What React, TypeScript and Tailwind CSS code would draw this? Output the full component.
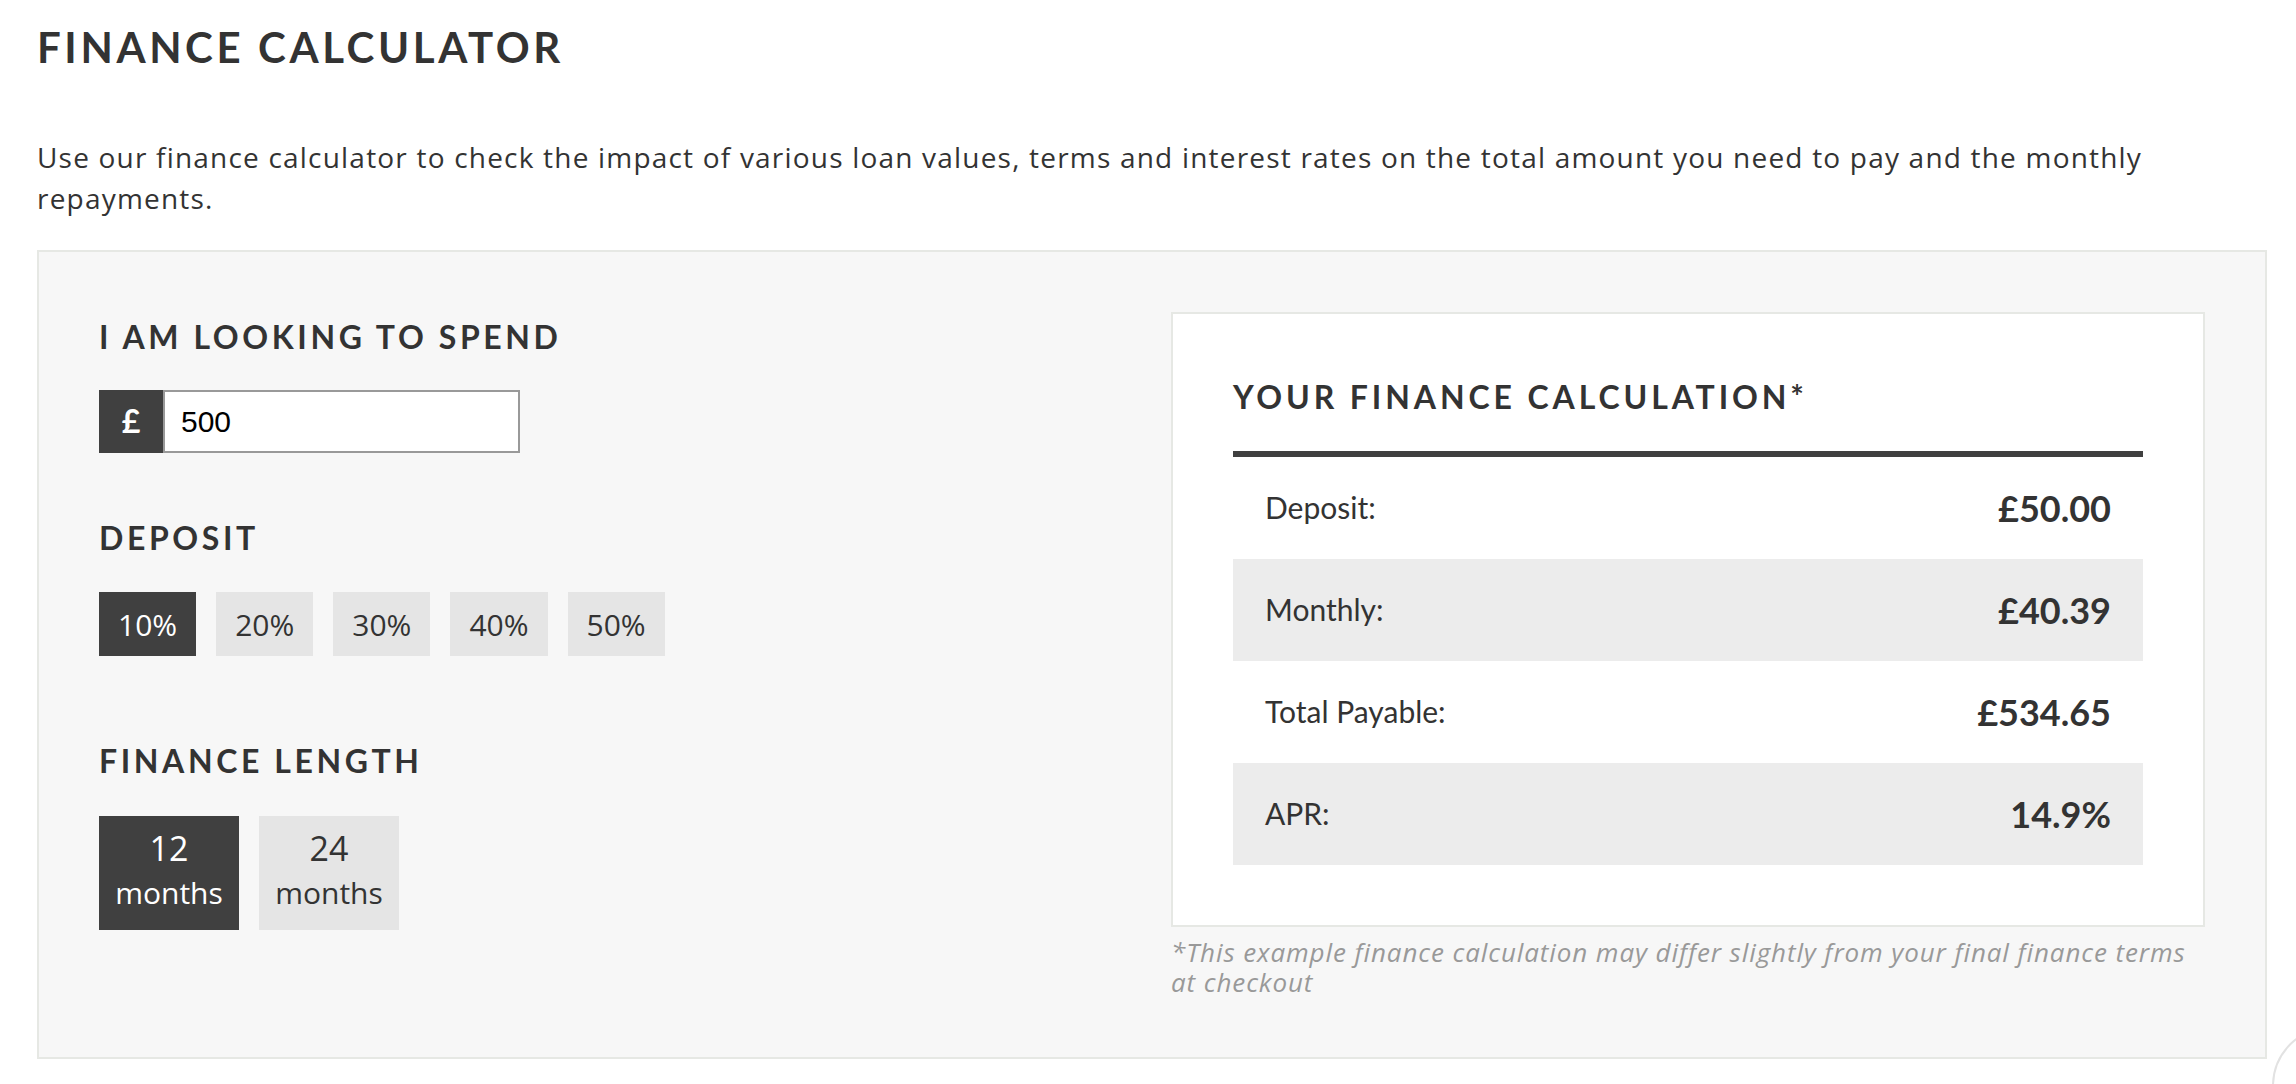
import { useState } from 'react';

const deposits = [10, 20, 30, 40, 50];
const lengths = [12, 24];

export default function App() {
  const [spend, setSpend] = useState('500');
  const [deposit, setDeposit] = useState(10);
  const [months, setMonths] = useState(12);

  return (
    <div className="relative min-h-screen overflow-hidden bg-white pl-[37px] pr-[29px] pt-[22px] text-[#333]">
      {/* Title */}
      <h1 className="font-['Lato',sans-serif] text-[42px] font-bold uppercase leading-[1.2] tracking-[3.6px]">
        Finance Calculator
      </h1>

      <p className="mt-[65px] font-['Open_Sans',sans-serif] text-[28px] leading-[41px] tracking-[1.2px]">
        Use our finance calculator to check the impact of various loan values, terms and interest rates on the total
        amount you need to pay and the monthly repayments.
      </p>

      {/* Calculator panel */}
      <div className="mt-[31px] flex border-2 border-[#e6e8e4] bg-[#f7f7f7] p-[60px]">
        {/* Left column */}
        <div className="flex-1 pt-[6px]">
          <SectionHeading>I am looking to spend</SectionHeading>
          <div className="mt-[33px] flex h-[63px] w-[421px]">
            <span className="flex w-[64px] items-center justify-center bg-[#404040] font-['Lato',sans-serif] text-[32px] font-bold text-white">
              £
            </span>
            <input
              value={spend}
              onChange={(e) => setSpend(e.target.value)}
              className="w-[357px] border-2 border-[#999] bg-white px-[16px] font-['Liberation_Sans',Arial,sans-serif] text-[30px] text-black outline-none"
            />
          </div>

          <div className="mt-[66px]">
            <SectionHeading>Deposit</SectionHeading>
          </div>
          <div className="mt-[35px] flex gap-[20px]">
            {deposits.map((d) => (
              <button
                key={d}
                onClick={() => setDeposit(d)}
                className={`flex h-[64px] items-center px-[19px] font-['Open_Sans',sans-serif] text-[30px] ${
                  deposit === d ? 'bg-[#404040] text-white' : 'bg-[#e5e5e5] text-[#333]'
                }`}
              >
                {d}%
              </button>
            ))}
          </div>

          <div className="mt-[86px]">
            <SectionHeading>Finance length</SectionHeading>
          </div>
          <div className="mt-[35px] flex gap-[20px]">
            {lengths.map((m) => (
              <button
                key={m}
                onClick={() => setMonths(m)}
                className={`flex h-[114px] w-[140px] flex-col items-center pt-[12px] font-['Open_Sans',sans-serif] ${
                  months === m ? 'bg-[#404040] text-white' : 'bg-[#e5e5e5] text-[#333]'
                }`}
              >
                <span className="text-[34px] leading-[40px]">{m}</span>
                <span className="mt-[5px] text-[30px] leading-[40px]">months</span>
              </button>
            ))}
          </div>
        </div>

        {/* Right column */}
        <div className="w-[1034px]">
          <div className="border-2 border-[#e6e8e4] bg-white p-[60px]">
            <h2 className="mt-[4px] border-b-[6px] border-[#404040] pb-[34px] font-['Lato',sans-serif] text-[32px] font-bold uppercase leading-[1.2] tracking-[3.9px]">
              Your finance calculation*
            </h2>
            <Row label="Deposit:" value="£50.00" />
            <Row label="Monthly:" value="£40.39" shaded />
            <Row label="Total Payable:" value="£534.65" />
            <Row label="APR:" value="14.9%" shaded />
          </div>
          <p className="mt-[10px] font-['Open_Sans',sans-serif] text-[26px] italic leading-[30px] tracking-[0.9px] text-[#999]">
            *This example finance calculation may differ slightly from your final finance terms at checkout
          </p>
        </div>
      </div>

      {/* chat widget edge */}
      <div className="absolute left-[2272px] top-[1026px] h-[120px] w-[120px] rounded-full border-2 border-[#e2e2e2] bg-white" />
    </div>
  );
}

function SectionHeading({ children }: { children: React.ReactNode }) {
  return (
    <h3 className="font-['Lato',sans-serif] text-[32px] font-bold uppercase leading-[1.2] tracking-[3.6px]">
      {children}
    </h3>
  );
}

function Row({ label, value, shaded }: { label: string; value: string; shaded?: boolean }) {
  return (
    <div
      className={`flex h-[102px] items-center justify-between px-[32px] font-['Lato',sans-serif] ${
        shaded ? 'bg-[#ececec]' : ''
      }`}
    >
      <span className="text-[30px]">{label}</span>
      <span className="text-[36px] font-bold">{value}</span>
    </div>
  );
}
